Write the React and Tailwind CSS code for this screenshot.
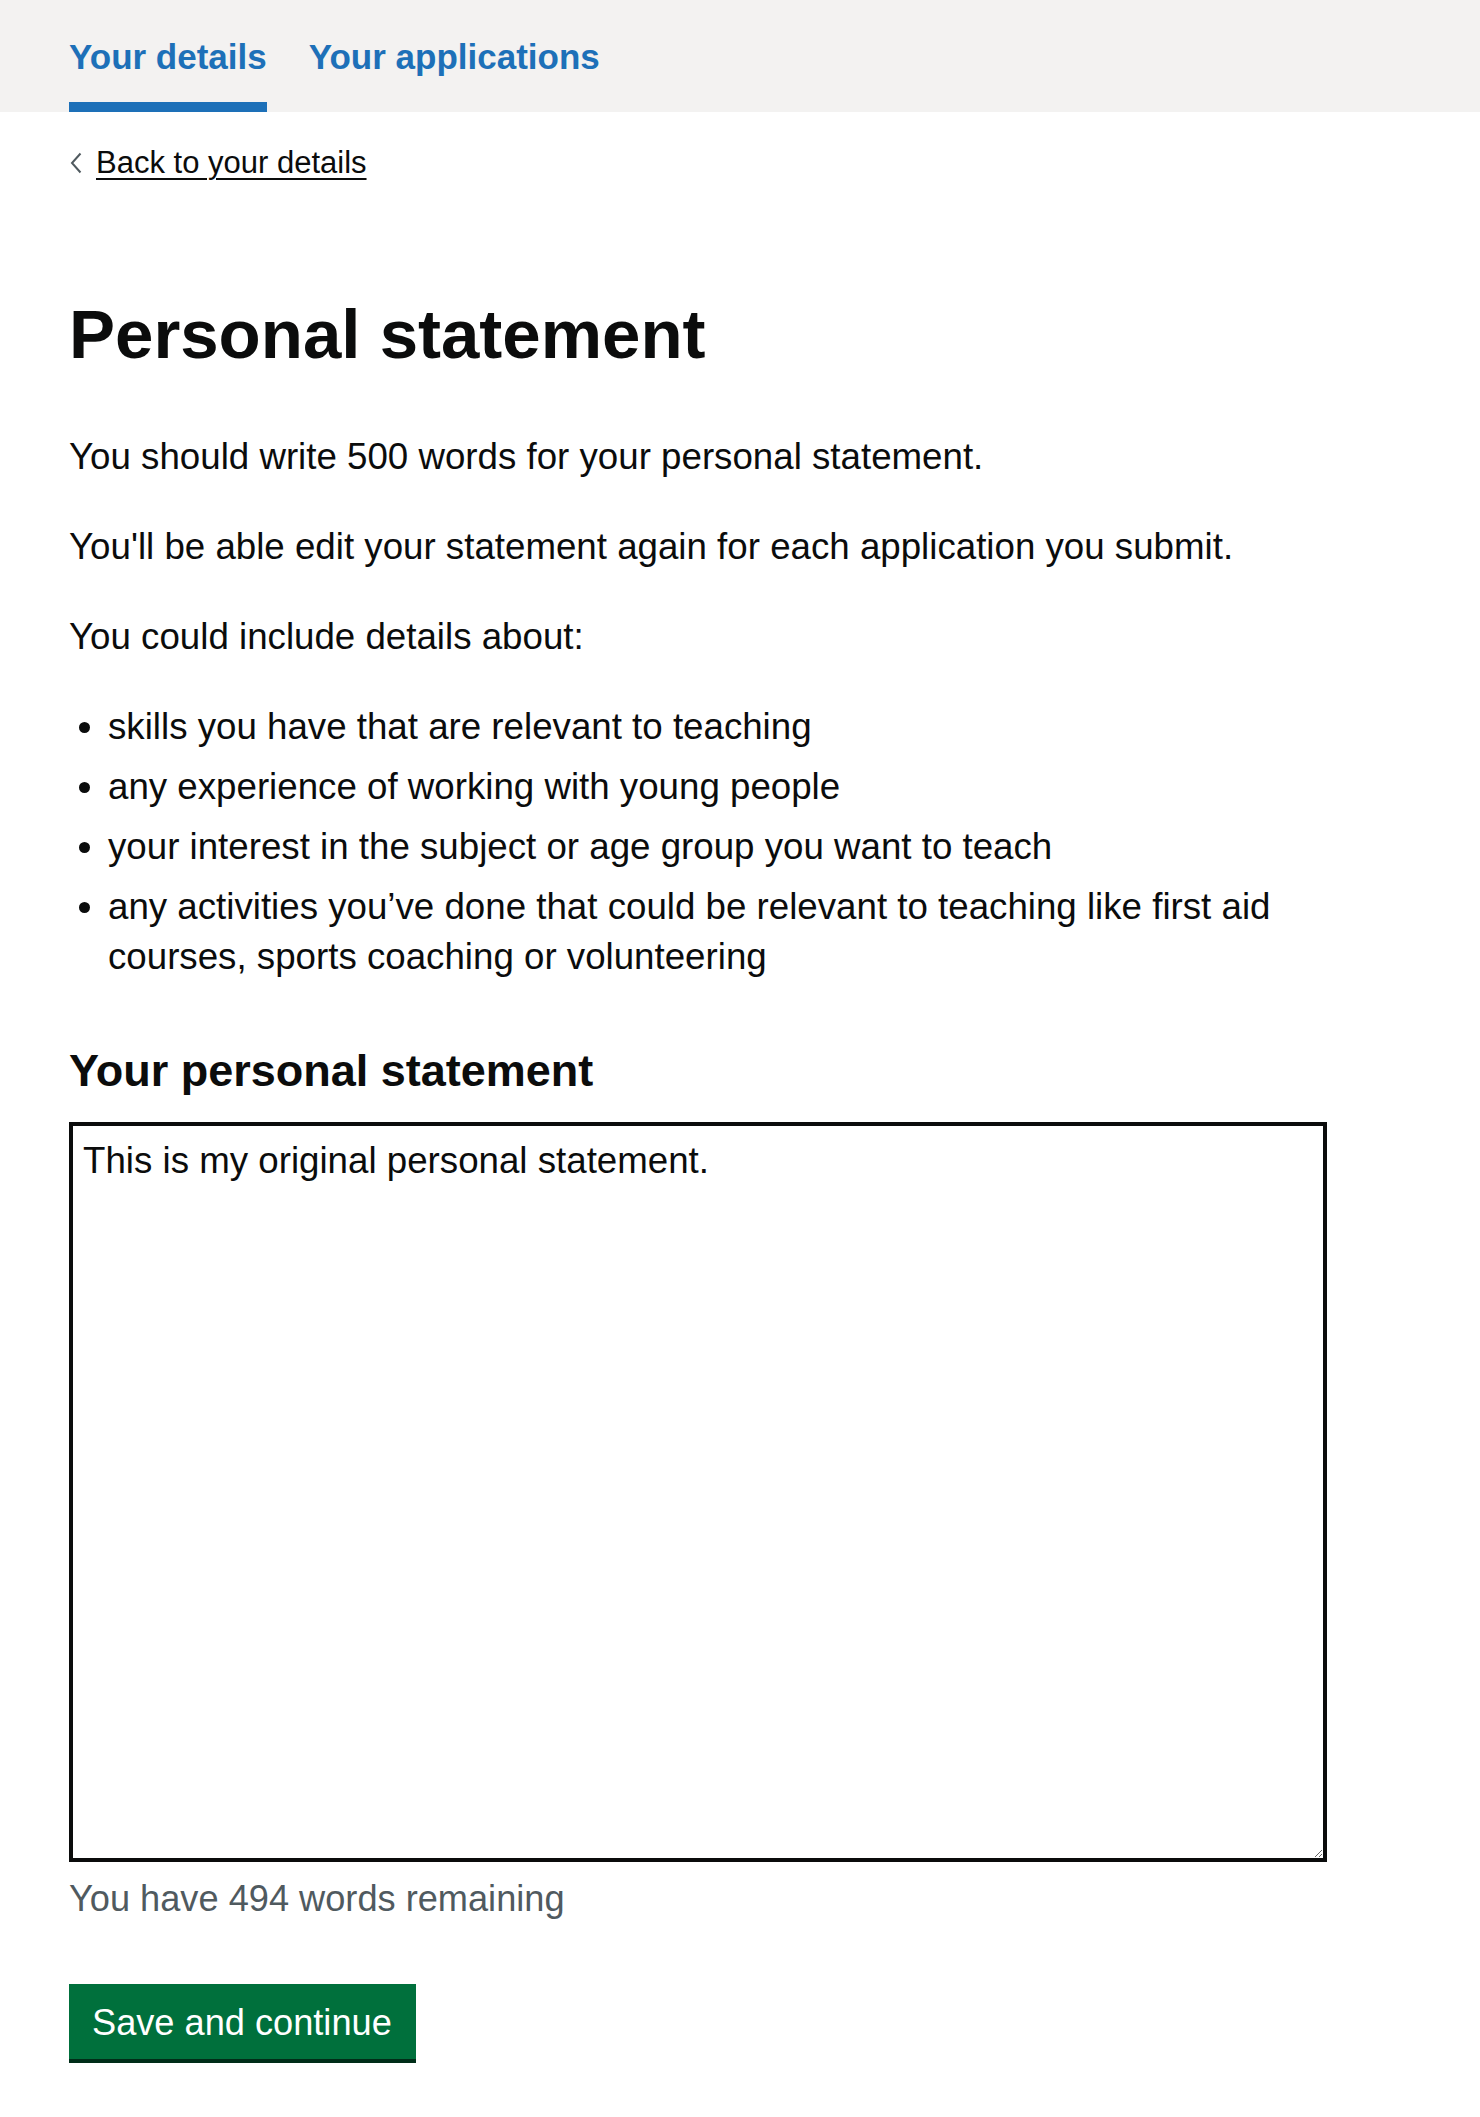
const bullets = [
  "skills you have that are relevant to teaching",
  "any experience of working with young people",
  "your interest in the subject or age group you want to teach",
  "any activities you’ve done that could be relevant to teaching like first aid courses, sports coaching or volunteering",
];

function BackChevron() {
  return (
    <svg width="12" height="22" viewBox="0 0 12 22" className="mr-[14px] shrink-0" aria-hidden="true">
      <path d="M10.5 1.5 L2 11 L10.5 20.5" fill="none" stroke="#505a5f" strokeWidth="2" />
    </svg>
  );
}

export default function App() {
  return (
    <div className="min-h-[2117px] bg-white text-[#0b0c0c] font-['Liberation_Sans',Arial,sans-serif]">
      <nav className="bg-[#f3f2f1] h-[112px]">
        <ul className="flex gap-[42px] pl-[69px]">
          <li>
            <a href="#" className="block h-[112px] pt-[37px] leading-[40px] text-[35px] font-bold text-[#1d70b8] border-b-[10px] border-[#1d70b8]">
              Your details
            </a>
          </li>
          <li>
            <a href="#" className="block h-[112px] pt-[37px] leading-[40px] text-[35px] font-bold text-[#1d70b8]">
              Your applications
            </a>
          </li>
        </ul>
      </nav>

      <main className="pl-[69px]">
        <div className="w-[1258px]">
          <a href="#" className="mt-[31px] flex items-center h-[40px] pl-[1px] text-[31px] leading-[40px] text-[#0b0c0c]">
            <BackChevron />
            <span className="underline underline-offset-[5px] decoration-[2px]">Back to your details</span>
          </a>

          <h1 className="mt-[114px] text-[69px] leading-[75px] font-bold">Personal statement</h1>

          <div className="mt-[60px] text-[36.7px] leading-[50px] space-y-[40px]">
            <p>You should write 500 words for your personal statement.</p>
            <p>You'll be able edit your statement again for each application you submit.</p>
            <p>You could include details about:</p>
          </div>

          <ul className="mt-[40px] mb-[40px] pl-[39px] list-disc text-[36.7px] leading-[50px] space-y-[10px]">
            {bullets.map((b) => (
              <li key={b} className="marker:text-[#0b0c0c]">{b}</li>
            ))}
          </ul>

          <label htmlFor="statement" className="block pt-[24px] mb-[26px] text-[45px] leading-[50px] font-bold">
            Your personal statement
          </label>
          <textarea
            id="statement"
            defaultValue="This is my original personal statement."
            className="block w-[1258px] h-[740px] border-[4px] border-[#0b0c0c] px-[10px] py-[10px] text-[36.7px] leading-[50px] text-[#0b0c0c] outline-none resize-y"
          />
          <div className="mt-[12px] text-[36.2px] leading-[50px] text-[#505a5f]">You have 494 words remaining</div>

          <button className="mt-[60px] bg-[#00703c] text-white text-[36.2px] leading-[42px] pt-[18px] pb-[15px] pl-[23px] pr-[24px] shadow-[0_4px_0_#002d18]">
            Save and continue
          </button>
        </div>
      </main>
    </div>
  );
}
